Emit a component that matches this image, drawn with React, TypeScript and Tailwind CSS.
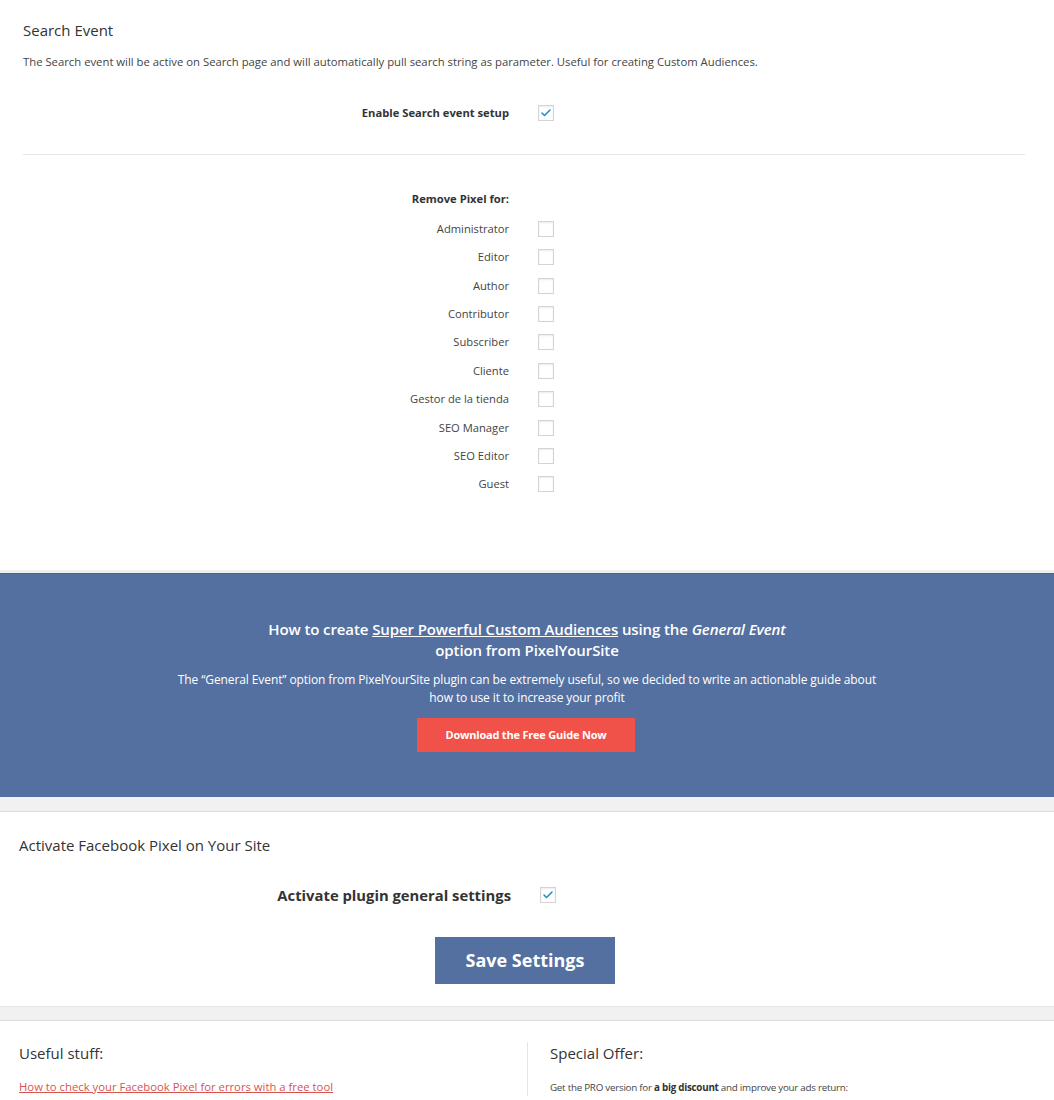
import { Check } from "lucide-react";

const roles = [
  "Administrator",
  "Editor",
  "Author",
  "Contributor",
  "Subscriber",
  "Cliente",
  "Gestor de la tienda",
  "SEO Manager",
  "SEO Editor",
  "Guest",
];

function Box({ checked = false }: { checked?: boolean }) {
  return (
    <span className="inline-flex w-4 h-4 items-center justify-center border border-[#d4d4d4] bg-white shadow-[inset_0_1px_2px_rgba(0,0,0,0.08)]">
      {checked && <Check size={12} strokeWidth={3} className="text-[#1e8cbe]" />}
    </span>
  );
}

export default function App() {
  return (
    <div className="w-[1054px] bg-white text-[#444] font-['Open_Sans','Noto_Sans',sans-serif]">
      {/* search event */}
      <section className="pl-[23px] pr-[29px] pt-[19px] pb-[78px]">
        <h2 className="text-[15px] leading-[22px] text-[#333]">Search Event</h2>
        <p className="mt-[13px] text-[11.3px] leading-[16px]">
          The Search event will be active on Search page and will automatically pull search string as parameter. Useful for creating Custom Audiences.
        </p>
        <div className="mt-[35px] grid grid-cols-[486px_1fr] gap-x-[29px] items-center">
          <span className="text-right text-[11.2px] font-bold text-[#333]">Enable Search event setup</span>
          <Box checked />
        </div>
        <div className="mt-[32px] border-t border-[#e5e5e5]" />
        <div className="mt-[34px] grid grid-cols-[486px_1fr] gap-x-[29px]">
          <span className="text-right text-[11.2px] font-bold text-[#333] leading-[20px]">Remove Pixel for:</span>
          <span />
        </div>
        <div className="mt-[12px] flex flex-col gap-[12.4px]">
          {roles.map((r) => (
            <div key={r} className="grid grid-cols-[486px_1fr] gap-x-[29px] items-center">
              <span className="text-right text-[11.2px] leading-[16px]">{r}</span>
              <Box />
            </div>
          ))}
        </div>
      </section>

      {/* guide banner */}
      <div className="h-[3px] bg-[#eef0ee]" />
      <section className="bg-[#5470a0] text-white text-center pt-[45px] pb-[45px] border-t border-[#4a6594]">
        <h3 className="text-[15px] leading-[20.5px] font-semibold tracking-[-0.1px]">
          How to create <span className="underline">Super Powerful Custom Audiences</span> using the <em>General Event</em>
          <br />
          option from PixelYourSite
        </h3>
        <p className="mt-[11px] text-[12px] leading-[18px] tracking-[-0.1px] w-[700px] mx-auto">
          The “General Event” option from PixelYourSite plugin can be extremely useful, so we decided to write an actionable guide about how to use it to increase your profit
        </p>
        <button className="mt-[11px] ml-[-2px] w-[218px] h-[34px] bg-[#f0524a] text-white text-[11px] font-bold tracking-[-0.2px]">
          Download the Free Guide Now
        </button>
      </section>
      <div className="h-[15px] bg-[#f1f1f1] border-b border-[#dcdcdc]" />

      {/* activate */}
      <section className="px-[19px] pt-[22px] pb-[22px]">
        <h2 className="text-[15px] leading-[22px] text-[#333]">Activate Facebook Pixel on Your Site</h2>
        <div className="mt-[28px] grid grid-cols-[492px_1fr] gap-x-[29px] items-center">
          <span className="text-right text-[14.8px] font-bold text-[#333]">Activate plugin general settings</span>
          <Box checked />
        </div>
        <div className="mt-[30px] flex justify-center">
          <button className="w-[180px] h-[47px] ml-[-4px] bg-[#5370a0] text-white text-[18px] font-bold">
            Save Settings
          </button>
        </div>
      </section>
      <div className="h-[15px] bg-[#f1f1f1] border-b border-[#dcdcdc] border-t border-t-[#e6e6e6]" />

      {/* footer */}
      <section className="grid grid-cols-2 pt-[21px] pb-[10px]">
        <div className="px-[19px] border-r border-[#e5e5e5] mr-[-1px]">
          <h4 className="text-[15px] leading-[22px] text-[#333]">Useful stuff:</h4>
          <a href="#" className="block mt-[15px] text-[11.3px] text-[#d9534f] underline">
            How to check your Facebook Pixel for errors with a free tool
          </a>
        </div>
        <div className="pl-[23px]">
          <h4 className="text-[15px] leading-[22px] text-[#333]">Special Offer:</h4>
          <p className="mt-[15px] text-[9.8px] tracking-[-0.25px] leading-[17px]">
            Get the PRO version for <b className="text-[#333]">a big discount</b> and improve your ads return:
          </p>
        </div>
      </section>
    </div>
  );
}
